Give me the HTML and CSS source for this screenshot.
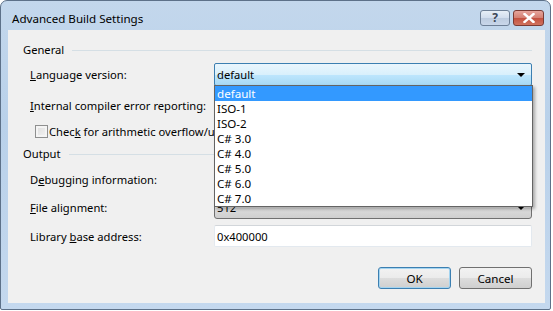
FILE: index.html
```html
<!DOCTYPE html>
<html lang="en">
<head>
    <meta charset="UTF-8">
    <title>Advanced Build Settings</title>
    <link rel="stylesheet" href="styles.css">
</head>
<body>
    <div class="window">
        <div class="titlebar">
            <span class="title">Advanced Build Settings</span>
            <div class="caption-buttons">
                <span class="cap-btn help">?</span>
                <span class="cap-btn close">
                    <svg width="12" height="10" viewBox="0 0 12 10"><path d="M1.5 1 L10.5 9 M10.5 1 L1.5 9" stroke="#fff" stroke-width="2.4" stroke-linecap="square"/></svg>
                </span>
            </div>
        </div>

        <div class="client">
            <div class="group-head general"><span>General</span><span class="rule"></span></div>

            <div class="row lang">
                <label><u>L</u>anguage version:</label>
                <div class="combo open">
                    <span class="value">default</span><span class="arrow"></span>
                    <ul class="dropdown">
                        <li class="selected">default</li>
                        <li>ISO-1</li>
                        <li>ISO-2</li>
                        <li>C# 3.0</li>
                        <li>C# 4.0</li>
                        <li>C# 5.0</li>
                        <li>C# 6.0</li>
                        <li>C# 7.0</li>
                    </ul>
                </div>
            </div>

            <!-- these two combos sit under the open list, their values don't show -->
            <div class="row internal">
                <label><u>I</u>nternal compiler error reporting:</label>
                <div class="combo"><span class="value"></span><span class="arrow"></span></div>
            </div>

            <div class="check-row">
                <span class="checkbox"></span>
                <span>Chec<u>k</u> for arithmetic overflow/underflow</span>
            </div>

            <div class="group-head output"><span>Output</span><span class="rule"></span></div>

            <div class="row debug">
                <label>D<u>e</u>bugging information:</label>
                <div class="combo"><span class="value"></span><span class="arrow"></span></div>
            </div>

            <div class="row file">
                <label><u>F</u>ile alignment:</label>
                <div class="combo"><span class="value">512</span><span class="arrow"></span></div>
            </div>

            <div class="row library">
                <label>Library <u>b</u>ase address:</label>
                <div class="textbox">0x400000</div>
            </div>

            <div class="buttons">
                <button class="default">OK</button>
                <button>Cancel</button>
            </div>
        </div>
    </div>
</body>
</html>
```

FILE: styles.css
```css
body {
    margin: 0;
    padding: 0;
    background: #ffffff;
    font-family: "Noto Sans", "Open Sans", sans-serif;
    font-size: 11.2px;
    color: #000;
}
.window {
    width: 551px;
    height: 310px;
    box-sizing: border-box;
    border: 1px solid #5d7189;
    border-radius: 7px 7px 2px 2px;
    padding: 0 5px 6px 7px;
    background: linear-gradient(to bottom, #c3d7ec 0%, #b9d1ea 40%, #c4d8ee 100%);
    display: flex;
    flex-direction: column;
}
.titlebar {
    height: 29px;
    display: flex;
    align-items: flex-start;
    justify-content: space-between;
}
.title {
    margin: 9px 0 0 4px;
    line-height: 17px;
    font-size: 11.6px;
}
.caption-buttons {
    display: flex;
    gap: 3px;
    margin-top: 9px;
    margin-right: 1px;
}
.cap-btn {
    height: 16px;
    box-sizing: border-box;
    border: 1px solid #6d7f96;
    border-radius: 3px;
    display: flex;
    align-items: center;
    justify-content: center;
}
.help {
    width: 30px;
    background: linear-gradient(to bottom, #e6eef7 0%, #d1dded 50%, #bccbdf 51%, #c9d7ea 100%);
    color: #3b4656;
    font-weight: bold;
    font-size: 12px;
    line-height: 14px;
}
.close {
    width: 31px;
    border-color: #7a3a33;
    background: linear-gradient(to bottom, #e6a59c 0%, #d47f72 50%, #c4503f 51%, #d0735f 100%);
}
.client {
    flex: 1;
    background: #f0f0f0;
    display: flex;
    flex-direction: column;
}
.group-head {
    height: 16px;
    display: flex;
    align-items: center;
    padding: 0 13px 0 15px;
    line-height: 16px;
}
.group-head .rule {
    flex: 1;
    height: 1px;
    background: #d5dfe5;
    margin-left: 8px;
}
.general {
    margin-top: 12px;
}
.output {
    margin-top: 6px;
}
.row {
    display: flex;
    align-items: center;
    padding: 0 13px 0 22px;
    height: 22px;
    margin-top: 6px;
}
.row label {
    width: 184px;
    flex-shrink: 0;
    white-space: nowrap;
}
.lang {
    margin-top: 5px;
    height: 23px;
    position: relative;
    z-index: 2;
}
.internal {
    margin-top: 8px;
}
.file {
    height: 23px;
}
.combo {
    flex: 1;
    height: 100%;
    box-sizing: border-box;
    border: 1px solid #707070;
    border-radius: 3px;
    background: linear-gradient(to bottom, #f2f2f2 0%, #ebebeb 50%, #dddddd 51%, #cfcfcf 100%);
    display: flex;
    align-items: center;
    padding: 0 6px 0 2px;
    position: relative;
}
.combo .value {
    flex: 1;
}
.combo .arrow {
    width: 0;
    height: 0;
    border-left: 4px solid transparent;
    border-right: 4px solid transparent;
    border-top: 4px solid #000;
}
.combo.open {
    border-color: #3c7fb1;
    border-radius: 2px;
    background: linear-gradient(to bottom, #eaf6fd 0%, #d9f0fc 50%, #bee6fd 51%, #a7d9f5 100%);
}
.dropdown {
    position: absolute;
    top: 100%;
    left: -1px;
    right: -2px;
    margin: 0;
    padding: 0;
    list-style: none;
    background: #fff;
    border: 1px solid #646464;
    box-shadow: 2px 2px 3px rgba(0, 0, 0, 0.3);
}
.dropdown li {
    height: 15px;
    line-height: 15px;
    padding-left: 2px;
    font-size: 11.6px;
}
.dropdown li.selected {
    background: #3399ff;
    color: #fff;
}
.check-row {
    display: flex;
    align-items: center;
    gap: 1px;
    height: 18px;
    margin-top: 6px;
    padding-left: 27px;
    white-space: nowrap;
}
.checkbox {
    width: 13px;
    height: 13px;
    box-sizing: border-box;
    border: 1px solid #8e8f8f;
    background: linear-gradient(135deg, #dcdcdc 0%, #f4f4f4 100%);
    box-shadow: inset 0 0 0 2px #f4f4f4;
}
.textbox {
    flex: 1;
    height: 100%;
    box-sizing: border-box;
    background: #fff;
    border: 1px solid #e3e9ef;
    border-top-color: #d2d6da;
    border-radius: 2px;
    padding-left: 2px;
    display: flex;
    align-items: center;
}
.buttons {
    display: flex;
    justify-content: flex-end;
    gap: 8px;
    padding-right: 13px;
    margin-top: 20px;
}
button {
    width: 73px;
    height: 22px;
    font-family: inherit;
    font-size: 11.6px;
    color: #000;
    border: 1px solid #707070;
    border-radius: 3px;
    background: linear-gradient(to bottom, #f2f2f2 0%, #ebebeb 50%, #dddddd 51%, #cfcfcf 100%);
    padding: 0;
}
button.default {
    border-color: #3c7fb1;
    box-shadow: inset 0 0 0 1px #a4d4f0;
}
```
